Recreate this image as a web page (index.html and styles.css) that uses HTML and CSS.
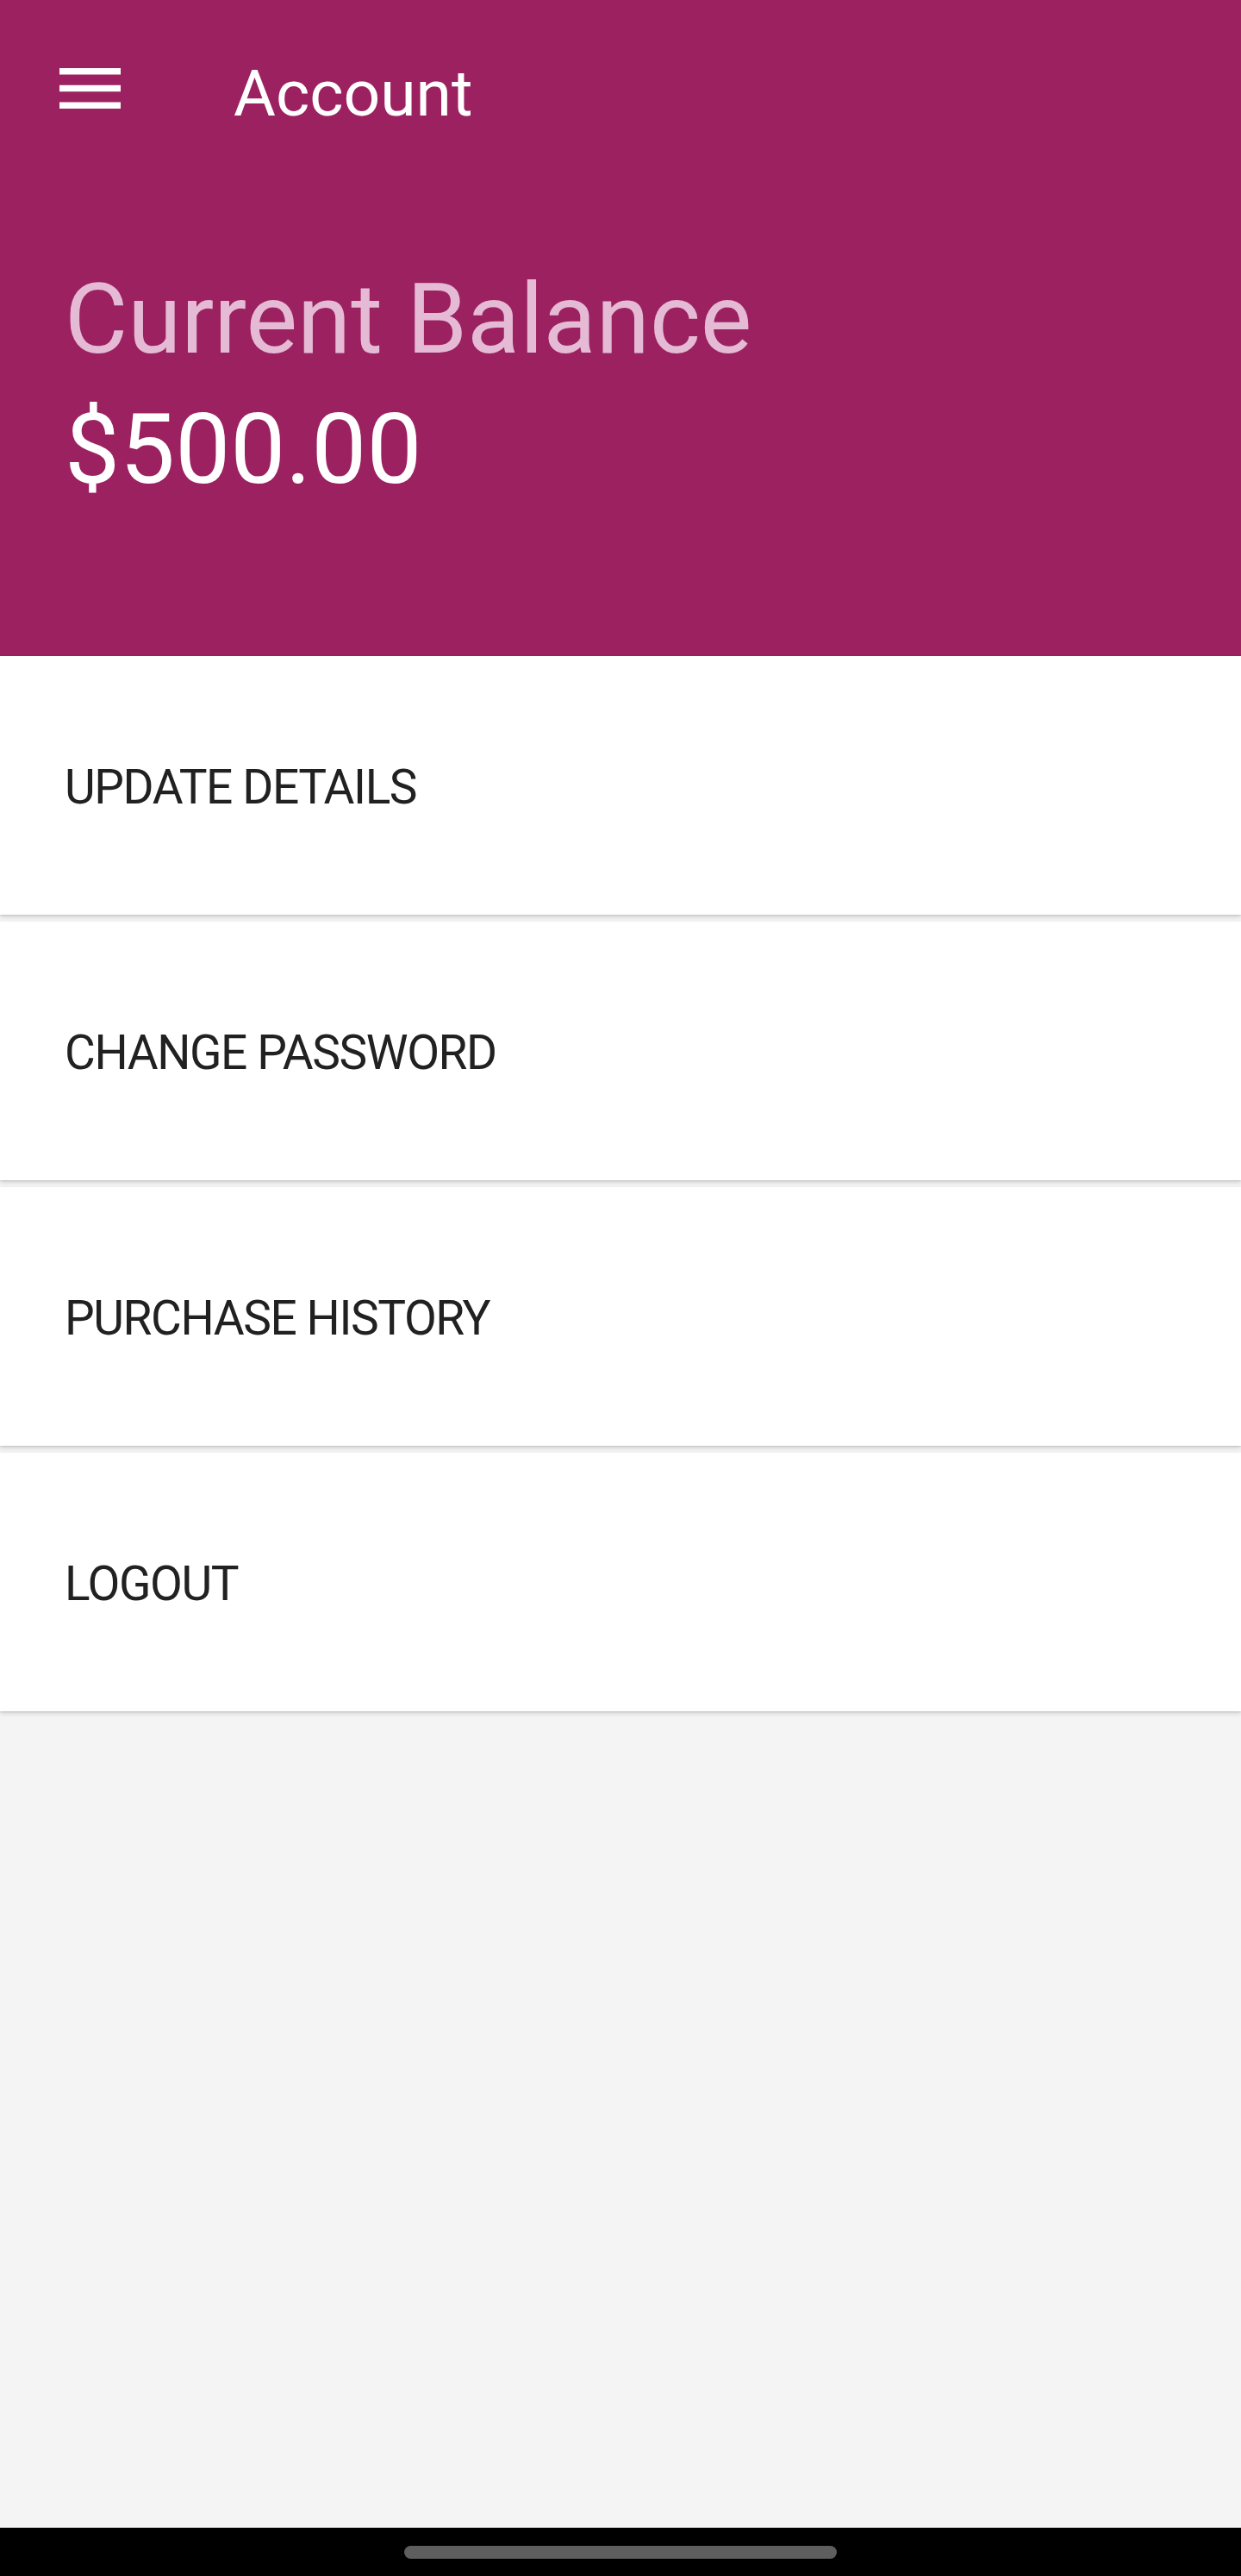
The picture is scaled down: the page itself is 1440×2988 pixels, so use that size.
FILE: index.html
```html
<!DOCTYPE html>
<html lang="en">
<head>
<meta charset="utf-8">
<title>Account</title>
<link rel="stylesheet" href="styles.css">
</head>
<body>
<div class="screen">
  <div class="content">
    <header class="appbar">
      <div class="toolbar">
        <svg class="menu-icon" viewBox="0 0 71 47" aria-hidden="true">
          <rect x="0" y="0" width="71" height="7.5" fill="#fff"/>
          <rect x="0" y="19.75" width="71" height="7.5" fill="#fff"/>
          <rect x="0" y="39.5" width="71" height="7.5" fill="#fff"/>
        </svg>
        <h1 class="title">Account</h1>
      </div>
      <div class="balance">
        <p class="balance-label">Current Balance</p>
        <p class="balance-amount">$500.00</p>
      </div>
    </header>
    <nav class="menu-list">
      <div class="menu-item">UPDATE DETAILS</div>
      <div class="menu-item">CHANGE PASSWORD</div>
      <div class="menu-item">PURCHASE HISTORY</div>
      <div class="menu-item">LOGOUT</div>
    </nav>
  </div>
  <div class="nav-bar"><div class="nav-pill"></div></div>
</div>
</body>
</html>
```
FILE: styles.css
```css
html, body {
  margin: 0;
  padding: 0;
}
body {
  font-family: Roboto, "Noto Sans", "Liberation Sans", sans-serif;
  background: #f4f4f4;
}
.screen {
  display: flex;
  flex-direction: column;
  width: 1440px;
  height: 2988px;
  background: #f4f4f4;
}
.content {
  flex: 1;
}
.appbar {
  background: #9c2160;
  height: 761px;
  box-sizing: border-box;
}
.toolbar {
  height: 210px;
  display: flex;
  align-items: flex-start;
  padding-left: 69px;
}
.menu-icon {
  width: 71px;
  height: 47px;
  margin-top: 79px;
  flex: none;
}
.title {
  margin: 64px 0 0 131px;
  font-size: 75px;
  line-height: 88px;
  font-weight: 400;
  color: #fff;
}
.balance {
  padding: 95px 0 0 75px;
}
.balance-label {
  margin: 0;
  font-size: 112.5px;
  line-height: 132px;
  font-weight: 400;
  color: #e5bad5;
}
.balance-amount {
  margin: 17px 0 0;
  font-size: 114px;
  line-height: 134px;
  font-weight: 400;
  color: #fff;
}
.menu-list {
  display: flex;
  flex-direction: column;
  gap: 8px;
  padding-bottom: 8px;
}
.menu-item {
  height: 300px;
  box-sizing: border-box;
  background: #fff;
  box-shadow: 0 3px 5px rgba(0, 0, 0, 0.11), 0 1px 2px rgba(0, 0, 0, 0.13);
  display: flex;
  align-items: center;
  padding: 4px 0 0 75px;
  font-size: 55px;
  letter-spacing: -1.4px;
  color: #212121;
}
.nav-bar {
  height: 56px;
  background: #000;
  display: flex;
  justify-content: center;
  align-items: flex-start;
  padding-top: 21px;
  box-sizing: border-box;
}
.nav-pill {
  width: 502px;
  height: 15px;
  border-radius: 8px;
  background: #5e5e5e;
}
```
